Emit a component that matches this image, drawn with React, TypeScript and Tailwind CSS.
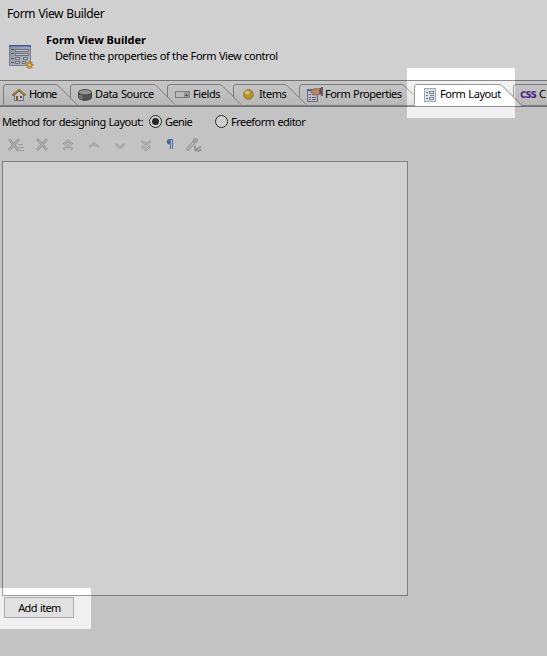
import type { ReactNode } from 'react';

const FormIcon = () => (
  <svg width="25" height="24" viewBox="0 0 25 24" className="block" shapeRendering="crispEdges">
    <defs>
      <linearGradient id="form-body" x1="0" y1="0" x2="1" y2="1">
        <stop offset="0" stopColor="#a9b0bd" /><stop offset="1" stopColor="#e4e9f3" />
      </linearGradient>
    </defs>
    <rect x="0.5" y="0.5" width="21" height="20" fill="url(#form-body)" stroke="#969eae" />
    <rect x="0" y="0" width="22" height="2" fill="#5068c4" />
    <rect x="1" y="1" width="20" height="1" fill="#8598e0" />
    <path d="M2 4.5h3M2 8.5h3M2 13.5h3M2 17.5h3" stroke="#666c7a" />
    <path d="M6.5 4.500h13v2h-13zM6.500 8.500h13v2h-13zM6.500 12.500h4v2h-4zM14.500 12.500h4v2h-4zM6.500 16.500h4v2h-4zM13.500 16.500h3v2h-3z" fill="#eef0f5" stroke="#858c9b" />
    <g shapeRendering="auto">
      <path d="M20.5 16v8M16.5 20h8M17.7 17.2l5.6 5.6M23.3 17.2l-5.6 5.6" stroke="#e2aa38" strokeWidth="1.8" />
      <circle cx="20.5" cy="20" r="1.6" fill="#ffe59a" />
    </g>
  </svg>
);

const HomeIcon = () => (
  <svg width="14" height="14" viewBox="0 0 14 14" className="block">
    <path d="M2.5 7v5.5h9V7L7 3z" fill="#f4f2e8" stroke="#8a8a8a" />
    <path d="M.5 7.500 7 2l6.500 5.500" fill="none" stroke="#96783c" strokeWidth="2.2" />
    <path d="M1 7 7 1.5 13 7" fill="none" stroke="#e0c078" strokeWidth=".9" />
    <path d="M4 8h2v4H4z" fill="#94713a" /><path d="M8 8h2v2H8z" fill="#4c668e" />
  </svg>
);

const DataIcon = () => (
  <svg width="14" height="12" viewBox="0 0 14 12" className="block">
    <path d="M.5 3.5v5c0 1.5 3 2.8 6.5 2.8s6.5-1.3 6.5-2.8v-5z" fill="#666" stroke="#505050" />
    <path d="M2 6v4M3.8 6v4.5" stroke="#aaa" />
    <ellipse cx="7" cy="3.3" rx="6.5" ry="2.7" fill="#b5b5b5" stroke="#555" />
  </svg>
);

const FieldIcon = () => (
  <svg width="15" height="7" viewBox="0 0 15 7" className="block" shapeRendering="crispEdges">
    <path d="M.5.5h14v6H.5z" fill="#e6e6e6" stroke="#9a9a9f" />
    <path d="M9 1h5v5H9z" fill="#b8b8be" /><path d="M11 3h1v1h-1zM10 4h3v1h-3z" fill="#666" />
  </svg>
);

const ItemIcon = () => (
  <svg width="11" height="11" viewBox="0 0 11 11" className="block">
    <circle cx="5.5" cy="5.5" r="4.9" fill="#e0b32c" stroke="#a08238" strokeWidth=".7" />
    <ellipse cx="4.3" cy="3.7" rx="2.5" ry="1.9" fill="#fbee9e" />
  </svg>
);

const PropertiesIcon = () => (
  <svg width="17" height="16" viewBox="0 0 17 16" className="block">
    <path d="M.5 2.5h10v12H.5z" fill="#e9e9f0" stroke="#7a7f8e" />
    <path d="M0 2h8v2H0z" fill="#5a76c8" />
    <path d="M2 7.5h2M5 7.5h4M2 10.5h2M5 10.5h4M2 12.5h2M5 12.5h4" stroke="#747b8e" />
    <path d="M3 4 8 1.5 13 2v5L9 8H6l1-2-3-.3z" fill="#e3a482" stroke="#a56e54" strokeWidth=".7" />
    <path d="M12.5 1h1.5v6.5h-1.5z" fill="#b8404a" /><path d="M14 0h2v9h-2z" fill="#6c7896" />
  </svg>
);

const LayoutIcon = () => (
  <svg width="12" height="14" viewBox="0 0 12 14" className="block" shapeRendering="crispEdges">
    <path d="M.5.5h11v13H.5z" fill="#dde2ea" stroke="#a0a8b6" />
    <path d="M2 4.5h2M2 7.5h2M2 10.5h2" stroke="#6a7280" />
    <path d="M5.5 3.5h4v2h-4zM5.5 7.5h4M5.5 9.5h4v2h-4z" fill="#fff" stroke="#7c8594" />
  </svg>
);

interface TabProps {
  width: string;
  extent: number;
  label: string;
  labelClass?: string;
  icon: ReactNode;
  iconClass: string;
  active?: boolean;
  first?: boolean;
  cut?: number;
}

const Tab = ({ width, extent, label, labelClass = '', icon, iconClass, active, first, cut = 20 }: TabProps) => (
  <div className={`relative flex h-[21px] shrink-0 items-center ${width} ${active ? 'z-10' : ''}`}>
    <svg width={extent + 22} height="23" className="absolute left-0 top-0">
      {active && <path d={`M1 22V3Q1 1 3 1H${extent - 2}L${extent + 19} 22z`} fill="#fff" />}
      <path
        d={`M.5 ${active || first ? 20.5 : 13}V3Q.5.5 3 .5H${extent - 3}Q${extent - 1} .5 ${extent} 1.5L${extent - 1 + cut} ${cut + 0.5}`}
        fill="none"
        stroke="#989898"
      />
    </svg>
    <span className={`relative shrink-0 ${iconClass}`}>{icon}</span>
    <span className={`relative -top-px whitespace-nowrap ${labelClass}`}>{label}</span>
  </div>
);

const Toolbar = () => (
  <svg width="210" height="18" viewBox="0 0 210 18" fill="none" className="-ml-[2px] block">
    <g stroke="#bebebe" strokeWidth="2.8">
      <path d="m9 3 9 11M19 3 9 14M37 3l10 11M47 3 37 14" />
    </g>
    <g stroke="#dcdcdc" strokeWidth="1">
      <path d="m9 3 9 11M19 3 9 14M37 3l10 11M47 3 37 14" />
    </g>
    <path d="M18 8.5h5M18 11.5h6M16 14.5h8" stroke="#c0c0c0" />
    <g stroke="#c2c2c2" strokeWidth="2.6">
      <path d="m63.500 8.500 4.500-3.500 4.500 3.500M63.500 13.500l4.500-3.500 4.500 3.500M89.500 11l4.500-3.500 4.500 3.500M115.500 8l4.500 3.500 4.500-3.500M141.500 5l4.500 3.500 4.500-3.500M141.500 10l4.500 3.500 4.500-3.500" />
    </g>
    <g stroke="#e6e6e6" strokeWidth="1">
      <path d="m63.500 8.500 4.500-3.500 4.500 3.500M63.500 13.500l4.500-3.500 4.500 3.500M89.500 11l4.500-3.500 4.500 3.500M115.500 8l4.500 3.500 4.500-3.500M141.500 5l4.500 3.500 4.500-3.500M141.500 10l4.500 3.500 4.500-3.500" />
    </g>
    <path d="M169 3h4v10h-1V4h-1v9h-1V8.500a2.700 2.700 0 0 1-1-5.500z" fill="#5b86bd" />
    <path d="m188 13 6-7" stroke="#c2c2c2" strokeWidth="4" strokeLinecap="round" />
    <path d="m188 13 6-7" stroke="#dedede" strokeWidth="1.600" />
    <circle cx="195.500" cy="4.500" r="2.600" fill="#c2c2c2" />
    <path d="M195 9.500v5h4.500M195.500 14l5.500-3.500M197.500 15.500l4-2" stroke="#b4b4b4" strokeWidth="1.700" />
  </svg>
);

export default function App() {
  return (
    <main className="relative flex h-[656px] w-[547px] flex-col overflow-hidden bg-[#f0f0f0] font-['Noto_Sans',sans-serif] text-[11px] leading-[14px] tracking-[-0.4px] text-black">
      <header className="h-20 shrink-0 bg-white">
        <h1 className="pl-[7px] pt-[6px] text-[12px] leading-4 tracking-[-0.38px] [word-spacing:0.5px]">Form View Builder</h1>
        <div className="flex pl-[9px] pt-[11px]">
          <div className="w-[37px] pt-3"><FormIcon /></div>
          <div>
            <h2 className="font-bold leading-[14px] tracking-normal">Form View Builder</h2>
            <p className="pl-[9px] pt-[2px] tracking-[-0.43px] [word-spacing:0.4px]">Define the properties of the Form View control</p>
          </div>
        </div>
      </header>

      <nav className="flex h-[27px] shrink-0 flex-col border-y border-[#8c8c8c] bg-linear-to-b from-[#f3f3f3] to-[#e2e2e2] pl-[3px]">
        <div className="flex h-[25px] pt-[3px]">
          <Tab width="w-[67px]" extent={55} label="Home" icon={<HomeIcon />} iconClass="ml-[9px] w-[17px]" labelClass="tracking-[-1px]" first />
          <Tab width="w-[97px]" extent={86} label="Data Source" icon={<DataIcon />} iconClass="ml-[8px] w-[17px]" labelClass="[word-spacing:0.7px]" />
          <Tab width="w-[66px]" extent={55} label="Fields" icon={<FieldIcon />} iconClass="ml-[8px] w-[18px]" />
          <Tab width="w-[66px]" extent={54} label="Items" icon={<ItemIcon />} iconClass="ml-[10px] w-[16px]" />
          <Tab width="w-[115px]" extent={105} label="Form Properties" icon={<PropertiesIcon />} iconClass="ml-[8px] w-[18px]" labelClass="tracking-[-0.5px] [word-spacing:0.5px]" cut={10} />
          <Tab width="w-[99px]" extent={88} label="Form Layout" icon={<LayoutIcon />} iconClass="ml-[10px] w-[16px]" labelClass="tracking-[-0.44px] [word-spacing:0.5px]" active />
          <Tab width="w-[34px]" extent={70} label="C" icon={<b className="relative -top-px text-[12px] tracking-[-0.7px] text-[#5a32ae]">css</b>} iconClass="ml-[7px] w-[19px]" />
        </div>
        <div className="-ml-[3px] -mt-px h-px shrink-0 bg-[#989898]" />
      </nav>

      <section className="flex grow flex-col pl-[2px]">
        <div className="flex h-7 items-center pt-px">
          <span className="w-[147px] whitespace-nowrap tracking-[-0.45px] [word-spacing:0.3px]">Method for designing Layout:</span>
          <span className="mr-[3px] flex size-[13px] items-center justify-center rounded-full border border-[#333] bg-white"><i className="size-[7px] rounded-full bg-[#333]" /></span>
          <span className="w-[50px] tracking-[-0.6px]">Genie</span>
          <span className="mr-[3px] size-[13px] rounded-full border border-[#333] bg-white" />
          <span className="whitespace-nowrap tracking-[-0.52px] [word-spacing:0.5px]">Freeform editor</span>
        </div>
        <div className="h-[26px] pt-px"><Toolbar /></div>
        <div className="h-[435px] w-[406px] shrink-0 border border-[#9b9b9b] bg-white" />
        <button className="ml-[2px] mt-px h-[21px] w-[70px] border border-[#adadad] bg-[#e1e1e1] pl-px tracking-[-0.65px] [word-spacing:1px]">Add item</button>
      </section>

      <div className="pointer-events-none absolute inset-0 z-20 bg-black/[.184] [clip-path:polygon(evenodd,0_0,547px_0,547px_656px,0_656px,0_0,407px_68px,515px_68px,515px_118px,407px_118px,407px_68px,0_0,0_588px,91px_588px,91px_629px,0_629px,0_588px,0_0)]" />
    </main>
  );
}
